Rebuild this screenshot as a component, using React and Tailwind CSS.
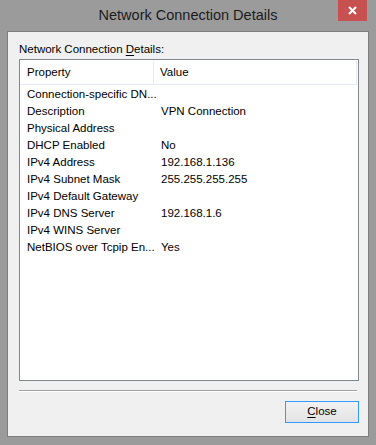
import React from 'react';

const rows = [
  ['Connection-specific DN...', ''],
  ['Description', 'VPN Connection'],
  ['Physical Address', ''],
  ['DHCP Enabled', 'No'],
  ['IPv4 Address', '192.168.1.136'],
  ['IPv4 Subnet Mask', '255.255.255.255'],
  ['IPv4 Default Gateway', ''],
  ['IPv4 DNS Server', '192.168.1.6'],
  ['IPv4 WINS Server', ''],
  ['NetBIOS over Tcpip En...', 'Yes'],
];

const App = () => {
  return (
    <div className="w-[376px] h-[445px] bg-[#9b9b9b] flex flex-col font-['Liberation_Sans',Arial,sans-serif] text-black overflow-hidden">
      {/* Title bar */}
      <div className="relative h-[31px] shrink-0 flex items-center justify-center">
        <span className="text-[14.5px] text-[#1b1b1b]">Network Connection Details</span>
        <button className="absolute top-0 right-[9px] w-[29px] h-[21px] bg-[#c75050] flex items-center justify-center">
          <svg width="9" height="9" viewBox="0 0 9 9">
            <path d="M1 1 L8 8 M8 1 L1 8" stroke="white" strokeWidth="2" />
          </svg>
        </button>
      </div>

      {/* Client area */}
      <div className="mx-[7px] h-[406px] border border-[#7e7e7e] bg-[#f0f0f0] flex flex-col pl-[11px] pr-[9px] pt-[10px] text-[11.5px]">
        <div className="h-[17px] leading-[15px]">
          Network Connection <span className="underline underline-offset-2">D</span>etails:
        </div>

        <div className="h-[322px] border border-[#828790] bg-white flex flex-col">
          <div className="h-[25px] pt-[1px] flex border-b border-[#e5eaf5] mr-[1px]">
            <div className="w-[134px] pl-[7px] flex items-center border-r border-[#e5eaf5]">Property</div>
            <div className="flex-1 pl-[6px] flex items-center border-r border-[#e5eaf5]">Value</div>
          </div>
          <div className="pt-[1px]">
            {rows.map(([prop, val]) => (
              <div key={prop} className="h-[17px] flex items-center">
                <div className="w-[134px] pl-[7px] whitespace-nowrap">{prop}</div>
                <div className="pl-[7px] whitespace-nowrap">{val}</div>
              </div>
            ))}
          </div>
        </div>

        <div className="mt-[9px] mr-[2px] border-t border-[#a0a0a0] border-b border-b-white" />

        <div className="flex justify-end mt-[9px]">
          <button className="w-[74px] h-[22px] border border-[#3399ff] bg-gradient-to-b from-[#f2f2f2] to-[#e3e3e3] flex items-center justify-center text-[11.5px]">
            <span><span className="underline underline-offset-2">C</span>lose</span>
          </button>
        </div>
      </div>
    </div>
  );
};

export default App;
